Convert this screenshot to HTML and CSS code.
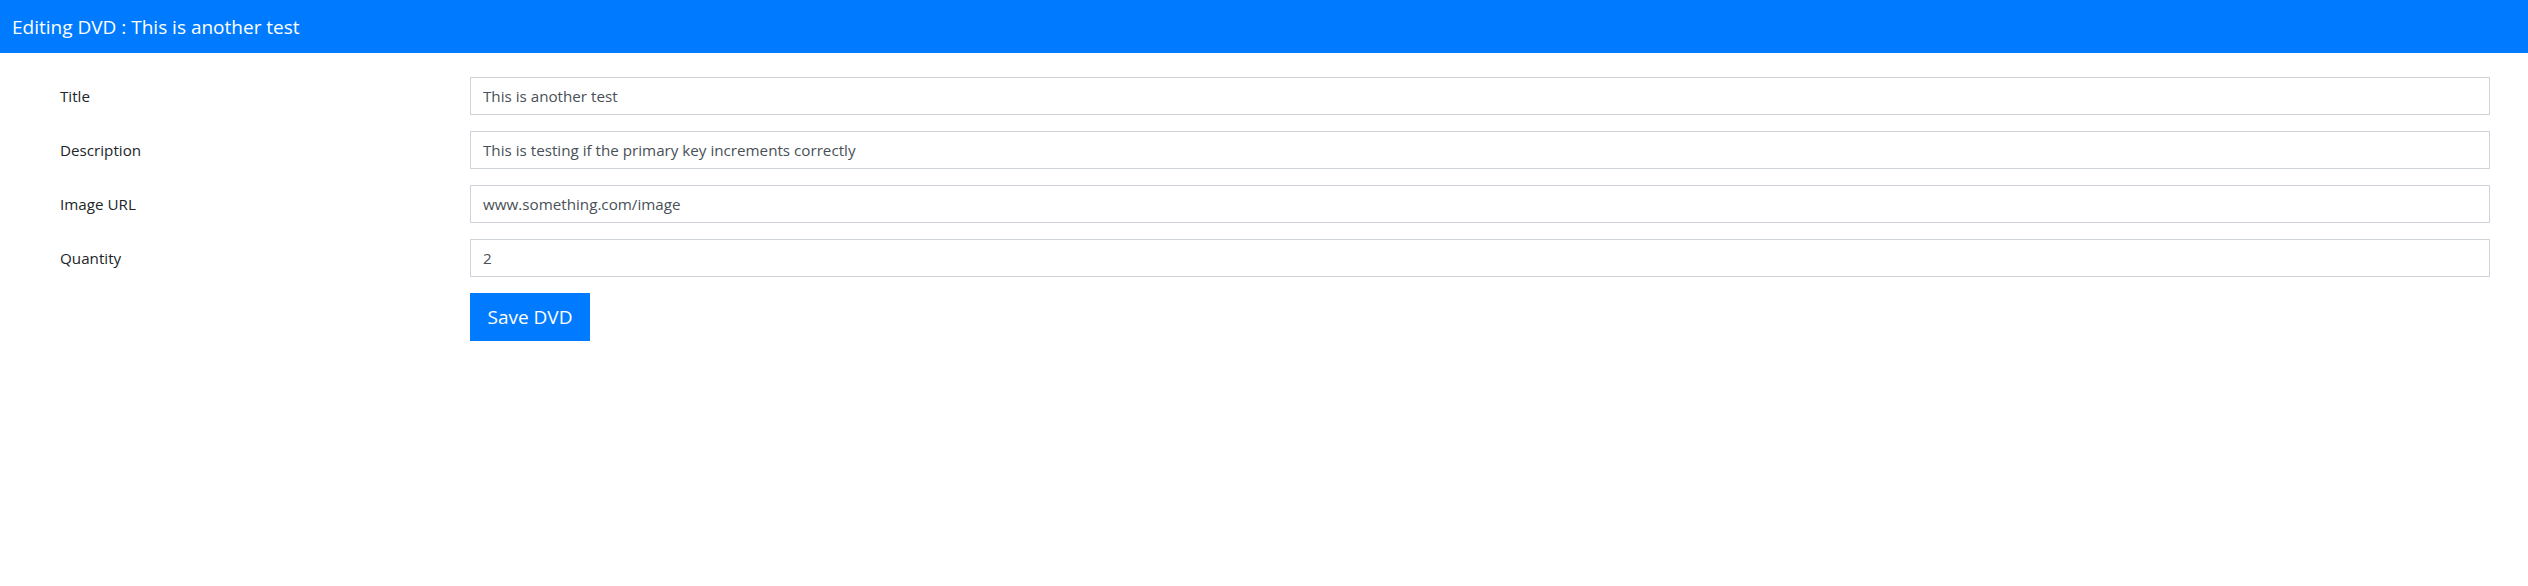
FILE: index.html
```html
<!DOCTYPE html>
<html lang="en">
<head>
<meta charset="utf-8">
<title>Editing DVD</title>
<link rel="stylesheet" href="styles.css">
</head>
<body>
<header class="topbar">Editing DVD : This is another test</header>
<form class="dvd-form">
  <label class="field-label" for="title">Title</label>
  <input class="field-input" id="title" type="text" value="This is another test">
  <label class="field-label" for="desc">Description</label>
  <input class="field-input" id="desc" type="text" value="This is testing if the primary key increments correctly">
  <label class="field-label" for="img">Image URL</label>
  <input class="field-input" id="img" type="text" value="www.something.com/image">
  <label class="field-label" for="qty">Quantity</label>
  <input class="field-input" id="qty" type="text" value="2">
  <div class="actions">
    <button class="save-btn" type="button">Save DVD</button>
  </div>
</form>
</body>
</html>
```
FILE: styles.css
```css
html, body {
  margin: 0;
  padding: 0;
  background: #fff;
  font-family: "Open Sans", "Noto Sans", sans-serif;
}
.topbar {
  height: 53px;
  box-sizing: border-box;
  background: #007bff;
  color: #fff;
  font-size: 19px;
  padding-left: 12px;
  display: flex;
  align-items: center;
}
.dvd-form {
  display: grid;
  grid-template-columns: 410px 1fr;
  row-gap: 16px;
  padding: 24px 38px 0 60px;
  align-items: center;
}
.field-label {
  font-size: 15.2px;
  color: #212529;
}
.field-input {
  height: 38px;
  box-sizing: border-box;
  border: 1px solid #ced4da;
  border-radius: 0;
  padding: 0 12px;
  font-family: inherit;
  font-size: 15.2px;
  color: #495057;
  outline: none;
  width: 100%;
}
.actions {
  grid-column: 2;
}
.save-btn {
  width: 120px;
  height: 48px;
  border: none;
  border-radius: 0;
  background: #007bff;
  color: #fff;
  font-family: inherit;
  font-size: 19px;
  padding: 0;
}
```
